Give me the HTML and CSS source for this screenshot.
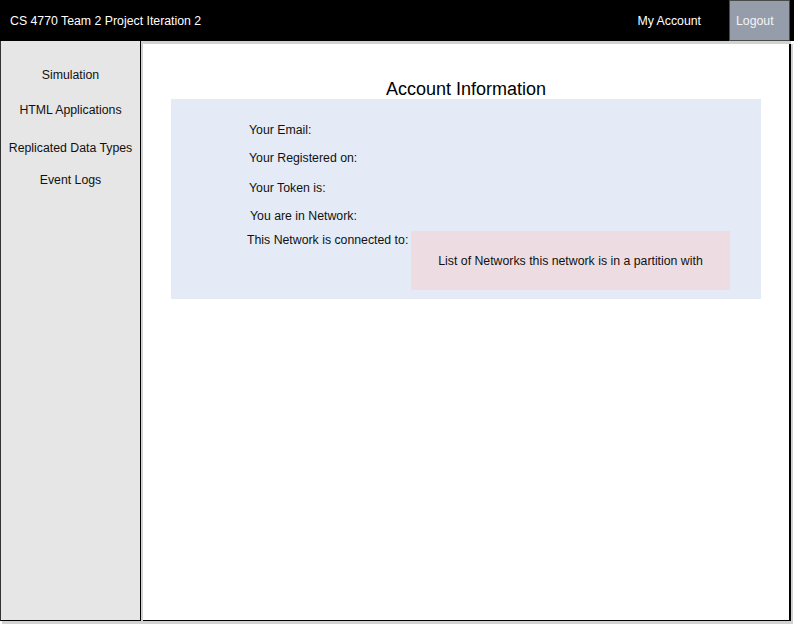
FILE: index.html
```html
<!DOCTYPE html>
<html>
<head>
<meta charset="utf-8">
<link rel="stylesheet" href="styles.css">
</head>
<body>
<header class="topbar">
  <div class="brand">CS 4770 Team 2 Project Iteration 2</div>
  <div class="account">My Account</div>
  <div class="logout">Logout</div>
</header>
<div class="frame">
  <nav class="sidebar">
    <div class="nav-item n1">Simulation</div>
    <div class="nav-item n2">HTML Applications</div>
    <div class="nav-item n3">Replicated Data Types</div>
    <div class="nav-item n4">Event Logs</div>
  </nav>
  <main class="main">
    <h1 class="title">Account Information</h1>
    <section class="info">
      <div class="row r1">Your Email:</div>
      <div class="row r2">Your Registered on:</div>
      <div class="row r3">Your Token is:</div>
      <div class="row r4">You are in Network:</div>
      <div class="row-net">
        <div class="net-label">This Network is connected to:</div>
        <div class="net-list">List of Networks this network is in a partition with</div>
      </div>
    </section>
  </main>
</div>
</body>
</html>
```
FILE: styles.css
```css
html, body {
  margin: 0;
  padding: 0;
  background: #ffffff;
}
body {
  font-family: "Liberation Sans", Arial, sans-serif;
  font-size: 12.3px;
  color: #111;
  width: 794px;
  height: 627px;
  overflow: hidden;
}
.topbar {
  display: flex;
  align-items: center;
  height: 41px;
  background: #000;
  color: #fff;
}
.brand {
  padding-left: 10px;
  flex: 1;
}
.account {
  margin-right: 28px;
}
.logout {
  box-sizing: border-box;
  width: 61px;
  height: 41px;
  margin-right: 4px;
  background: #959dab;
  border: 1px solid #4a4a4a;
  color: #f4f4f4;
  padding-left: 6px;
  display: flex;
  align-items: center;
}
.frame {
  display: flex;
  width: 791px;
  height: 580px;
  background: #d2d2d2;
  box-shadow: 2px 3px 0 #d2d2d2;
}
.sidebar {
  box-sizing: border-box;
  width: 141px;
  height: 580px;
  background: #e6e6e6;
  border-right: 1px solid #000;
  border-bottom: 1px solid #000;
  border-left: 1px solid #333;
  padding-top: 27px;
  text-align: center;
}
.nav-item {
  line-height: 14px;
}
.n2 { margin-top: 21px; }
.n3 { margin-top: 24px; }
.n4 { margin-top: 18px; }
.main {
  box-sizing: border-box;
  margin-left: 2px;
  margin-top: 3px;
  width: 648px;
  height: 577px;
  background: #fff;
  border-right: 2px solid #000;
  border-bottom: 1px solid #000;
  padding: 35px 28px 0 28px;
}
.title {
  margin: 0;
  font-weight: normal;
  font-size: 18px;
  line-height: 20px;
  text-align: center;
  color: #000;
}
.info {
  background: #e4ebf6;
  padding: 24px 0 9px 78px;
}
.row {
  line-height: 14px;
}
.r2 { margin-top: 14px; }
.r3 { margin-top: 16px; }
.r4 { margin-top: 14px; padding-left: 1px; }
.row-net {
  display: flex;
  align-items: flex-start;
  margin-top: 8px;
  margin-left: -2px;
}
.net-label {
  line-height: 14px;
  margin-top: 2px;
  width: 164px;
}
.net-list {
  width: 319px;
  height: 59px;
  background: #eddde2;
  display: flex;
  align-items: center;
  justify-content: center;
}
```
